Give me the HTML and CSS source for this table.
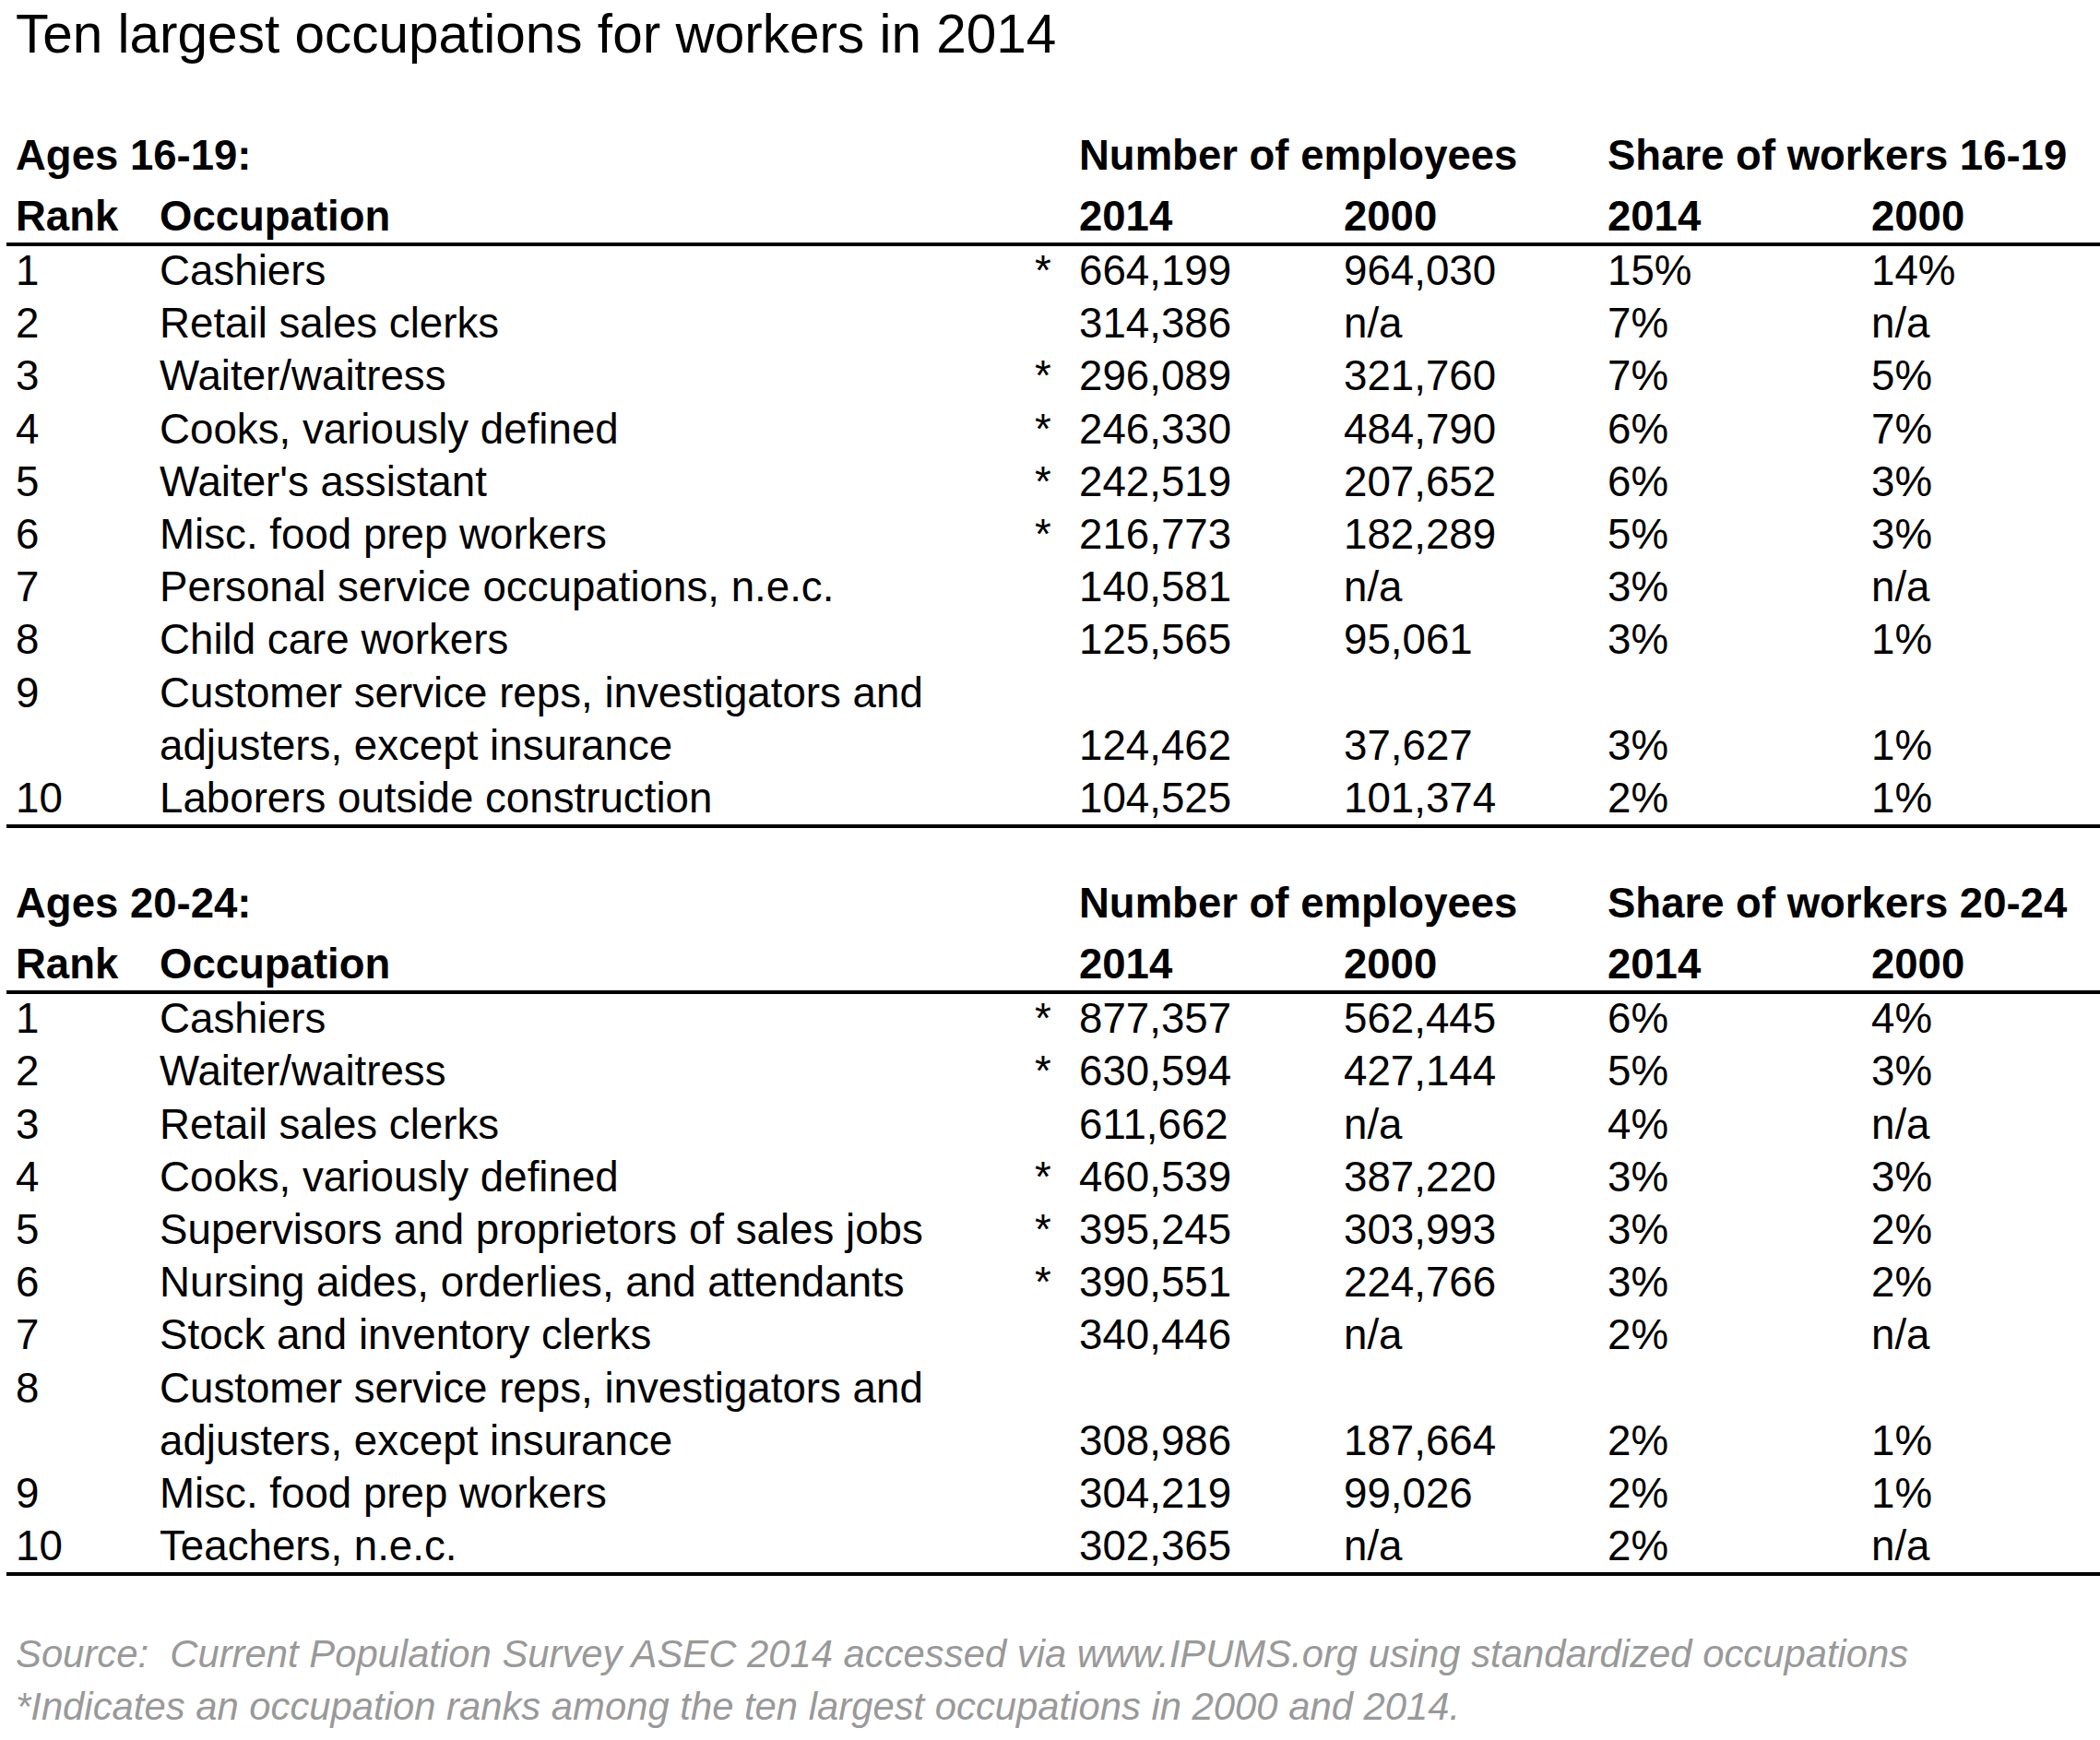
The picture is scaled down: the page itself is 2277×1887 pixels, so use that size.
FILE: index.html
```html
<!DOCTYPE html>
<html lang="en">
<head>
<meta charset="utf-8">
<title>Ten largest occupations for workers in 2014</title>
<link rel="stylesheet" href="styles.css">
</head>
<body>
<div class="page">
  <h1 class="title">Ten largest occupations for workers in 2014</h1>

  <section class="group">
    <div class="row head1">
      <div class="span-label">Ages 16-19:</div>
      <div class="span-num">Number of employees</div>
      <div class="span-share">Share of workers 16-19</div>
    </div>
    <div class="row head2">
      <div>Rank</div><div>Occupation</div><div></div>
      <div>2014</div><div>2000</div><div>2014</div><div>2000</div>
    </div>
    <div class="rows">
      <div class="row"><div>1</div><div>Cashiers</div><div>*</div><div>664,199</div><div>964,030</div><div>15%</div><div>14%</div></div>
      <div class="row"><div>2</div><div>Retail sales clerks</div><div></div><div>314,386</div><div>n/a</div><div>7%</div><div>n/a</div></div>
      <div class="row"><div>3</div><div>Waiter/waitress</div><div>*</div><div>296,089</div><div>321,760</div><div>7%</div><div>5%</div></div>
      <div class="row"><div>4</div><div>Cooks, variously defined</div><div>*</div><div>246,330</div><div>484,790</div><div>6%</div><div>7%</div></div>
      <div class="row"><div>5</div><div>Waiter's assistant</div><div>*</div><div>242,519</div><div>207,652</div><div>6%</div><div>3%</div></div>
      <div class="row"><div>6</div><div>Misc. food prep workers</div><div>*</div><div>216,773</div><div>182,289</div><div>5%</div><div>3%</div></div>
      <div class="row"><div>7</div><div>Personal service occupations, n.e.c.</div><div></div><div>140,581</div><div>n/a</div><div>3%</div><div>n/a</div></div>
      <div class="row"><div>8</div><div>Child care workers</div><div></div><div>125,565</div><div>95,061</div><div>3%</div><div>1%</div></div>
      <div class="row tall"><div class="top">9</div><div>Customer service reps, investigators and<br>adjusters, except insurance</div><div></div><div>124,462</div><div>37,627</div><div>3%</div><div>1%</div></div>
      <div class="row"><div>10</div><div>Laborers outside construction</div><div></div><div>104,525</div><div>101,374</div><div>2%</div><div>1%</div></div>
    </div>
  </section>

  <section class="group">
    <div class="row head1">
      <div class="span-label">Ages 20-24:</div>
      <div class="span-num">Number of employees</div>
      <div class="span-share">Share of workers 20-24</div>
    </div>
    <div class="row head2">
      <div>Rank</div><div>Occupation</div><div></div>
      <div>2014</div><div>2000</div><div>2014</div><div>2000</div>
    </div>
    <div class="rows">
      <div class="row"><div>1</div><div>Cashiers</div><div>*</div><div>877,357</div><div>562,445</div><div>6%</div><div>4%</div></div>
      <div class="row"><div>2</div><div>Waiter/waitress</div><div>*</div><div>630,594</div><div>427,144</div><div>5%</div><div>3%</div></div>
      <div class="row"><div>3</div><div>Retail sales clerks</div><div></div><div>611,662</div><div>n/a</div><div>4%</div><div>n/a</div></div>
      <div class="row"><div>4</div><div>Cooks, variously defined</div><div>*</div><div>460,539</div><div>387,220</div><div>3%</div><div>3%</div></div>
      <div class="row"><div>5</div><div>Supervisors and proprietors of sales jobs</div><div>*</div><div>395,245</div><div>303,993</div><div>3%</div><div>2%</div></div>
      <div class="row"><div>6</div><div>Nursing aides, orderlies, and attendants</div><div>*</div><div>390,551</div><div>224,766</div><div>3%</div><div>2%</div></div>
      <div class="row"><div>7</div><div>Stock and inventory clerks</div><div></div><div>340,446</div><div>n/a</div><div>2%</div><div>n/a</div></div>
      <div class="row tall"><div class="top">8</div><div>Customer service reps, investigators and<br>adjusters, except insurance</div><div></div><div>308,986</div><div>187,664</div><div>2%</div><div>1%</div></div>
      <div class="row"><div>9</div><div>Misc. food prep workers</div><div></div><div>304,219</div><div>99,026</div><div>2%</div><div>1%</div></div>
      <div class="row"><div>10</div><div>Teachers, n.e.c.</div><div></div><div>302,365</div><div>n/a</div><div>2%</div><div>n/a</div></div>
    </div>
  </section>

  <footer class="notes">
    <p>Source:&nbsp; Current Population Survey ASEC 2014 accessed via www.IPUMS.org using standardized occupations</p>
    <p>*Indicates an occupation ranks among the ten largest occupations in 2000 and 2014.</p>
  </footer>
</div>
</body>
</html>
```

FILE: styles.css
```css
html, body {
  margin: 0;
  padding: 0;
  background: #ffffff;
}

body {
  color: #000000;
  font-family: "Liberation Sans", Arial, Helvetica, sans-serif;
}

.page {
  width: 2277px;
}

.title {
  margin: 4px 0 0 17px;
  font-size: 58.5px;
  font-weight: 400;
  line-height: 66px;
}

.group {
  margin: 61px 0 0 7px;
}

.group + .group {
  margin-top: 44px;
}

.row {
  display: grid;
  grid-template-columns: 156px 949px 48px 287px 286px 286px 1fr;
  padding-left: 10px;
  font-size: 45.7px;
  line-height: 57.2px;
  white-space: nowrap;
}

.head1 {
  font-weight: 700;
  font-size: 45.5px;
  line-height: 76px;
}

.head1 .span-label {
  grid-column: 1 / 3;
}

.head1 .span-num {
  grid-column: 4 / 6;
}

.head1 .span-share {
  grid-column: 6 / 8;
}

.head2 {
  font-weight: 700;
  font-size: 45.5px;
  line-height: 56px;
  border-bottom: 4px solid #000000;
}

.rows {
  margin-top: -2px;
  border-bottom: 4px solid #000000;
}

.row.tall > div {
  align-self: end;
}

.row.tall > .top {
  align-self: start;
}

.notes {
  margin: 56px 0 0 17px;
  color: #999999;
  font-size: 41.8px;
  font-style: italic;
  line-height: 57px;
}

.notes p {
  margin: 0;
}
```
